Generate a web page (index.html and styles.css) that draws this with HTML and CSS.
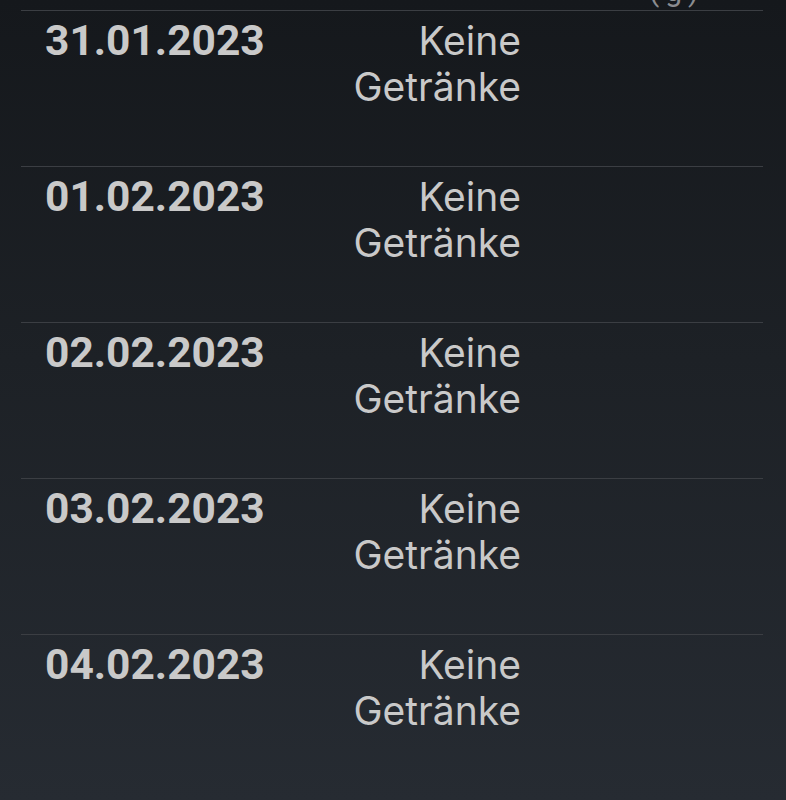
FILE: index.html
```html
<!DOCTYPE html>
<html lang="de">
<head>
<meta charset="utf-8">
<link rel="stylesheet" href="styles.css">
</head>
<body>
<div class="page">
  <div class="clip"><span class="clip-text">(g)</span></div>
  <div class="list">
    <div class="row"><div class="date">31.01.2023</div><div class="value">Keine<br>Getränke</div></div>
    <div class="row"><div class="date">01.02.2023</div><div class="value">Keine<br>Getränke</div></div>
    <div class="row"><div class="date">02.02.2023</div><div class="value">Keine<br>Getränke</div></div>
    <div class="row"><div class="date">03.02.2023</div><div class="value">Keine<br>Getränke</div></div>
    <div class="row"><div class="date">04.02.2023</div><div class="value">Keine<br>Getränke</div></div>
  </div>
</div>
</body>
</html>
```

FILE: styles.css
```css
html, body {
  margin: 0;
  padding: 0;
}
body {
  width: 786px;
  height: 800px;
  overflow: hidden;
  background: linear-gradient(180deg, #15181c 0%, #1d2126 45%, #262b32 100%);
  font-family: Roboto, "Noto Sans", sans-serif;
  color: #c9c9c9;
}
.page {
  padding: 0 23px 0 21px;
}
.clip {
  height: 10px;
  overflow: hidden;
  position: relative;
}
.clip-text {
  position: absolute;
  left: 628px;
  bottom: 4px;
  font-size: 30px;
  line-height: 1;
  color: #8a8c90;
  letter-spacing: 6px;
}
.row {
  border-top: 1px solid #3b3e43;
  height: 155px;
  display: flex;
  align-items: flex-start;
}
.date {
  width: 240px;
  padding-left: 24px;
  padding-top: 9px;
  font-size: 42.5px;
  font-weight: 700;
  line-height: 1;
}
.value {
  width: 236px;
  text-align: right;
  padding-top: 7px;
  font-family: Inter, "Noto Sans", sans-serif;
  font-size: 39px;
  line-height: 46px;
}
```
